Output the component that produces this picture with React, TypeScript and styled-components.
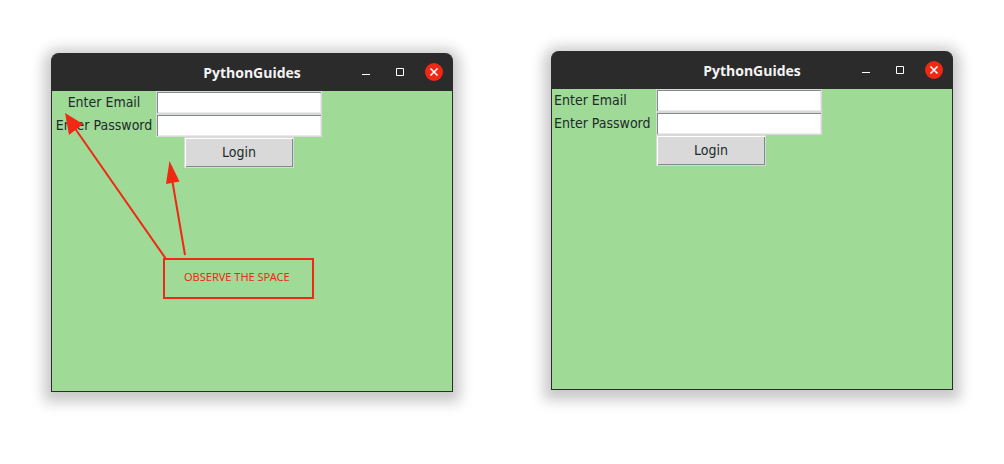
import React, { useId } from "react";
import styled, { createGlobalStyle } from "styled-components";

const GlobalStyle = createGlobalStyle`
  * { box-sizing: border-box; }
  body { margin: 0; background: #ffffff; }
`;

const Page = styled.main`
  display: grid;
  grid-template-columns: 1fr 1fr;
  align-items: start;
  gap: 98px;
  padding: 51px;
`;

const Window = styled.section<{ $lowered?: boolean }>`
  margin-top: ${(p) => (p.$lowered ? 2 : 0)}px;
  border: 1px solid #2b2b2b;
  border-top: 0;
  border-radius: 8px 8px 0 0;
  background: #2b2b2b;
  box-shadow: 0 3px 14px 7px rgba(0, 0, 0, 0.22);
`;

const TitleBar = styled.header`
  display: grid;
  grid-template-columns: 1fr auto 1fr;
  align-items: center;
  height: 38px;
  padding: 0 9px;
`;

const Title = styled.h1`
  grid-column: 2;
  margin: 0;
  padding-top: 2px;
  color: #f4f4f4;
  font: 700 14px/20px "Open Sans", "Noto Sans", sans-serif;
`;

const Controls = styled.div`
  display: flex;
  justify-content: flex-end;
  gap: 16px;
`;

const ControlButton = styled.button<{ $close?: boolean }>`
  width: 18px;
  height: 18px;
  padding: 0;
  border: 0;
  border-radius: 50%;
  background: ${(p) => (p.$close ? "#f02814" : "transparent")};
  svg { display: block; }
`;

const Content = styled.div`
  position: relative;
  min-height: 300px;
  background: #9fda96;
`;

const Form = styled.form`
  display: grid;
  grid-template-columns: 104px 166px;
  grid-auto-rows: minmax(23px, auto);
  align-items: center;
  color: #202b2b;
  font: 14px/17px "DejaVu Sans Condensed", "DejaVu Sans", sans-serif;
`;

const Label = styled.label<{ $centered?: boolean }>`
  padding: 0 2px;
  justify-self: ${(p) => (p.$centered ? "center" : "start")};
  white-space: nowrap;
`;

const Entry = styled.input`
  width: 100%;
  height: 23px;
  padding: 0 3px;
  border: 1px solid #d9d9d9;
  border-radius: 0;
  background: #ffffff;
  box-shadow: inset 1px 1px 0 #7e8c8c, inset -1px -1px 0 #ebebeb;
  font: inherit;
`;

const LoginButton = styled.button<{ $centered?: boolean }>`
  grid-column: 2;
  justify-self: ${(p) => (p.$centered ? "center" : "start")};
  width: 110px;
  height: 31px;
  padding: 0;
  border: 1px solid #d9d9d9;
  background: #d9d9d9;
  box-shadow: inset 1px 1px 0 #ffffff, inset -1px -1px 0 #7e8c8c;
  color: inherit;
  font: inherit;
`;

const Arrows = styled.svg`
  position: absolute;
  top: 0;
  left: 0;
  pointer-events: none;
`;

const Note = styled.p`
  position: absolute;
  top: 167px;
  left: 111px;
  margin: 0;
  padding: 8px 19px 12px;
  width: 151px;
  border: 2px solid #f02814;
  color: #f02814;
  font: 11px/17px "Noto Sans", sans-serif;
  white-space: nowrap;
`;

function LoginWindow({ centered, children }: { centered?: boolean; children?: React.ReactNode }) {
  const id = useId();
  return (
    <Window $lowered={centered}>
      <TitleBar>
        <Title>PythonGuides</Title>
        <Controls>
          <ControlButton type="button" aria-label="Minimize">
            <svg width="18" height="18"><path d="M5 11.5h8" stroke="#fff" /></svg>
          </ControlButton>
          <ControlButton type="button" aria-label="Maximize">
            <svg width="18" height="18"><path d="M5.500 5.500h7v7h-7z" stroke="#fff" fill="none" /></svg>
          </ControlButton>
          <ControlButton type="button" aria-label="Close" $close>
            <svg width="18" height="18"><path d="M5.500 5.500l7 7M12.500 5.500l-7 7" stroke="#fff" strokeWidth="1.600" /></svg>
          </ControlButton>
        </Controls>
      </TitleBar>
      <Content>
        <Form>
          <Label htmlFor={`${id}-email`} $centered={centered}>Enter Email</Label>
          <Entry id={`${id}-email`} type="text" />
          <Label htmlFor={`${id}-password`} $centered={centered}>Enter Password</Label>
          <Entry id={`${id}-password`} type="password" />
          <LoginButton type="button" $centered={centered}>Login</LoginButton>
        </Form>
        {children}
      </Content>
    </Window>
  );
}

export default function App() {
  return (
    <>
      <GlobalStyle />
      <Page>
        <LoginWindow centered>
          <Arrows width="270" height="210" aria-hidden="true">
            <g stroke="#f02814" strokeWidth="2">
              <path d="M114 168L22 36" />
              <path d="M133 164L120 88" />
            </g>
            <g fill="#f02814">
              <path d="M13 22L17 44L31 33Z" />
              <path d="M117.500 70L114 93L127.500 90.500Z" />
            </g>
          </Arrows>
          <Note>OBSERVE THE SPACE</Note>
        </LoginWindow>
        <LoginWindow />
      </Page>
    </>
  );
}
